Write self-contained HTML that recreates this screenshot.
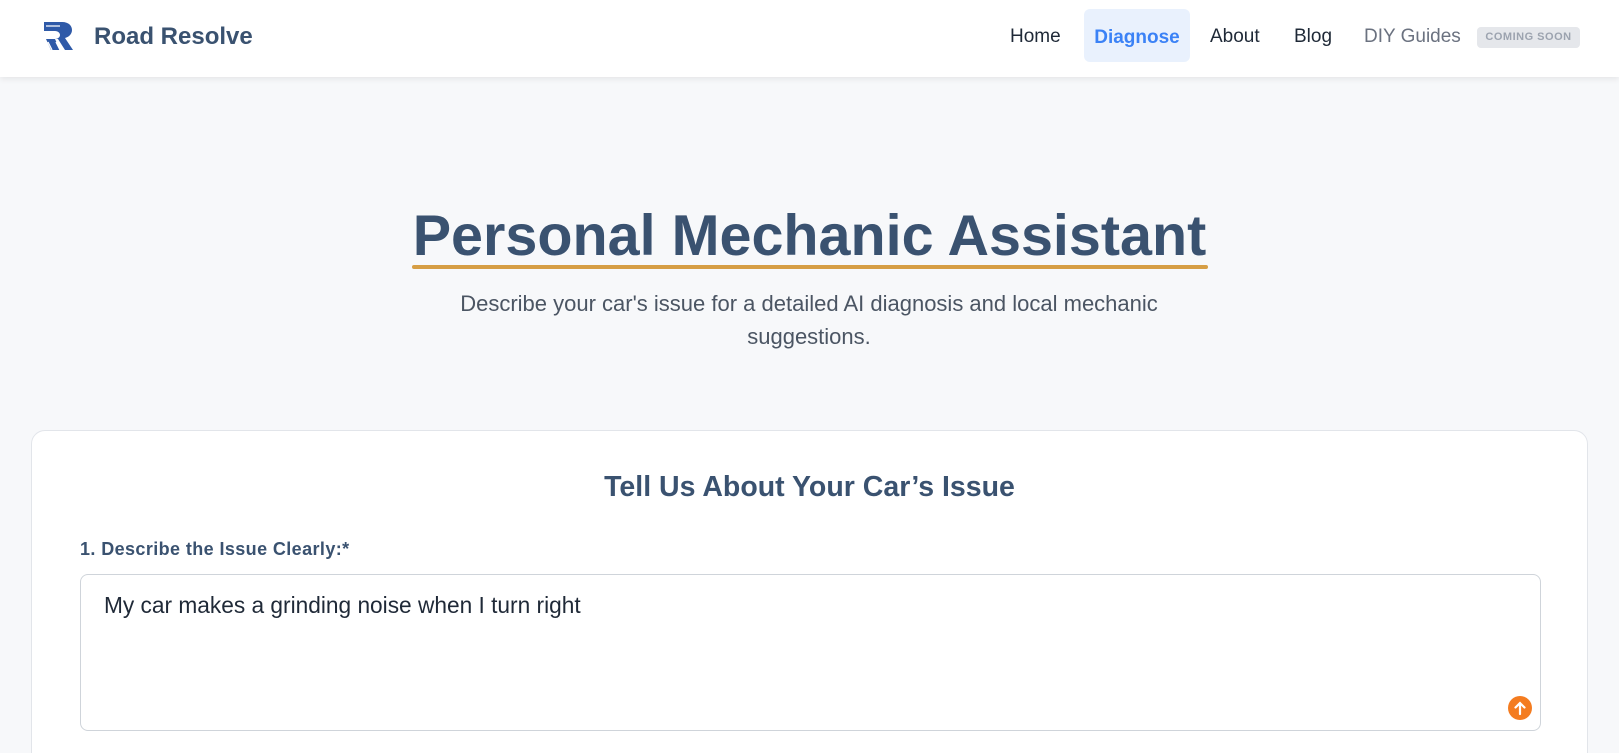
<!DOCTYPE html>
<html><head><meta charset="utf-8"><style>
*{box-sizing:border-box;margin:0;padding:0}
html,body{width:1619px;height:753px;overflow:hidden}
body{background:#f7f8fa;font-family:"Liberation Sans",sans-serif;position:relative}
.nav{position:absolute;left:0;top:0;width:1619px;height:77px;background:#fff;box-shadow:0 2px 6px rgba(0,0,0,.08)}
.brand{position:absolute;left:94px;top:23px;font-size:24px;font-weight:bold;color:#3a5270}
.nl{position:absolute;top:26px;font-size:19px;color:#1f2937}
.diag{position:absolute;left:1084px;top:9px;width:106px;height:53px;background:#e9f1fd;border-radius:6px;color:#3b82f6;font-weight:bold;font-size:19px;text-align:center;line-height:53px;padding-top:2px}
.badge{position:absolute;left:1477px;top:27px;width:103px;height:21px;background:#e5e7eb;border-radius:4px;color:#9ca3af;font-size:11px;font-weight:bold;letter-spacing:.5px;text-align:center;line-height:21px}
h1{position:absolute;left:0;width:1619px;top:203px;text-align:center;font-size:57.5px;font-weight:bold;color:#3a5270}
.ul{position:absolute;left:412px;top:265px;width:796px;height:4px;background:#d69e45;border-radius:2px}
.sub{position:absolute;left:439px;width:740px;top:287px;text-align:center;font-size:22px;line-height:33px;color:#4b5563}
.card{position:absolute;left:31px;top:430px;width:1557px;height:340px;background:#fff;border:1px solid #e2e5ea;border-radius:14px}
h2{position:absolute;left:0;width:1619px;top:471px;text-align:center;font-size:28.5px;font-weight:bold;color:#3a5270}
.lab{position:absolute;left:80px;top:539px;font-size:18px;letter-spacing:.4px;font-weight:bold;color:#3a5270}
.ta{position:absolute;left:80px;top:574px;width:1461px;height:157px;border:1px solid #cfd4da;border-radius:8px;background:#fff}
.tx{position:absolute;left:104px;top:592px;font-size:22.7px;color:#1f2937}
.oc{position:absolute;left:1508px;top:696px;width:24px;height:24px;border-radius:50%;background:#f47c20}
</style></head><body>
<div class="nav">
<svg style="position:absolute;left:42px;top:20px" width="32" height="31" viewBox="0 0 32 31"><path d="M2 2h18c7 0 10 4 10 8s-3 7-7 8l8 12h-8l-7-11h-3l5 11H9L4 19h9c3 0 5-2 5-4s-2-4-5-4H2z" fill="#2f5aa8"/><path d="M4 6h14M6 22l4 8M14 22l4 8" stroke="#fff" stroke-width="1.3" fill="none"/></svg>
<div class="brand">Road Resolve</div>
<div class="nl" style="left:1010px">Home</div>
<div class="diag">Diagnose</div>
<div class="nl" style="left:1210px">About</div>
<div class="nl" style="left:1294px">Blog</div>
<div class="nl" style="left:1364px;color:#6b7280">DIY Guides</div>
<div class="badge">COMING SOON</div>
</div>
<h1>Personal Mechanic Assistant</h1>
<div class="ul"></div>
<div class="sub">Describe your car's issue for a detailed AI diagnosis and local mechanic suggestions.</div>
<div class="card"></div>
<h2>Tell Us About Your Car’s Issue</h2>
<div class="lab">1. Describe the Issue Clearly:*</div>
<div class="ta"></div>
<div class="tx">My car makes a grinding noise when I turn right</div>
<div class="oc"><svg width="24" height="24" viewBox="0 0 24 24"><path d="M12 18V7M7.5 11.5L12 7l4.5 4.5" stroke="#fff" stroke-width="2.2" fill="none" stroke-linecap="round"/></svg></div>
</body></html>
